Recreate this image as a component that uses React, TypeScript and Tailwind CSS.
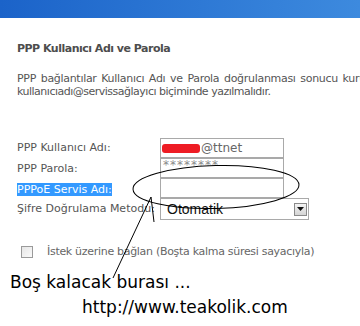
import React from "react";

const tahoma = { fontFamily: '"DejaVu Sans", Verdana, sans-serif' };

export default function App() {
  return (
    <div className="relative w-[360px] h-[326px] overflow-hidden bg-white" style={tahoma}>
      <div className="h-[18px] bg-gradient-to-r from-[#1b63c9] to-[#3d8ade]" />
      <div className="pl-[17px]">
        <div className="mt-[24px] text-[11px] leading-[13px] font-bold text-[#4d4d4d] whitespace-nowrap tracking-[-0.5px]">
          PPP Kullanıcı Adı ve Parola
        </div>
        <div className="mt-[17px] text-[11px] leading-[13px] text-[#555] whitespace-nowrap">
          <div className="tracking-[-0.3px] [word-spacing:1.5px]">PPP bağlantılar Kullanıcı Adı ve Parola doğrulanması sonucu kurulur.</div>
          <div className="tracking-[-0.5px]">kullanıcıadı@servissağlayıcı biçiminde yazılmalıdır.</div>
        </div>
        <div className="mt-[40px] grid grid-cols-[143px_1fr] text-[11px] text-[#555]">
          <div className="h-[20px] flex items-center pt-[1px]">PPP Kullanıcı Adı:</div>
          <div className="h-[20px] w-[124px] border border-[#a9a9a9] flex items-center pl-[1px]">
            <span className="inline-block w-[38px] h-[9px] bg-[#ee1c24] rounded-[3px] mr-[1px]" />
            <span className="text-[12px] text-[#666]">@ttnet</span>
          </div>
          <div className="h-[20px] flex items-center pt-[2px]">PPP Parola:</div>
          <div className="h-[20px] w-[124px] border border-[#a9a9a9] flex items-start pl-[2px] text-[12px] leading-[12px] text-[#8a8a8a] tracking-[1px]">
            ********
          </div>
          <div className="h-[20px] flex items-center pt-[2px]">
            <span className="bg-[#3399ff] text-white leading-[13px]">PPPoE Servis Adı:</span>
          </div>
          <div className="h-[20px] w-[124px] border border-[#a9a9a9]" />
          <div className="h-[22px] flex items-center">Şifre Doğrulama Metodu:</div>
          <div className="h-[22px] w-[149px] border border-[#a9a9a9] flex items-center justify-between pl-[6px] pr-[1px]">
            <span className="text-[14px] text-[#111]" style={{ fontFamily: '"Liberation Sans", Arial, sans-serif' }}>
              Otomatik
            </span>
            <span className="w-[13px] h-[13px] border border-[#8a8a8a] bg-gradient-to-b from-[#f4f4f4] to-[#d4d4d4] flex items-center justify-center">
              <svg width="7" height="4" viewBox="0 0 7 4">
                <path d="M0 0h7L3.5 4z" fill="#111" />
              </svg>
            </span>
          </div>
        </div>
        <div className="mt-[24px] flex items-center text-[11px] text-[#666] tracking-[-0.3px] whitespace-nowrap">
          <span className="ml-[4px] w-[12px] h-[12px] border border-[#9a9a9a] bg-gradient-to-br from-[#e6e6e6] to-[#fafafa]" />
          <span className="ml-[14px]">İstek üzerine bağlan (Boşta kalma süresi sayacıyla)</span>
        </div>
      </div>
      <div className="mt-[10px] pl-[10px] text-[17px] leading-[22px] text-black whitespace-nowrap">
        Boş kalacak burası ...
      </div>
      <div className="mt-[3px] pl-[82px] text-[17px] leading-[22px] text-black whitespace-nowrap">
        http://www.teakolik.com
      </div>
      <svg className="absolute left-0 top-0 pointer-events-none" width="360" height="326" viewBox="0 0 360 326">
        <ellipse cx="216" cy="187" rx="83" ry="21.5" transform="rotate(-1.5 216 187)" fill="none" stroke="#000" strokeWidth="1" />
        <path d="M113 278 L151 197 L154 222" fill="none" stroke="#000" strokeWidth="1" />
      </svg>
    </div>
  );
}
